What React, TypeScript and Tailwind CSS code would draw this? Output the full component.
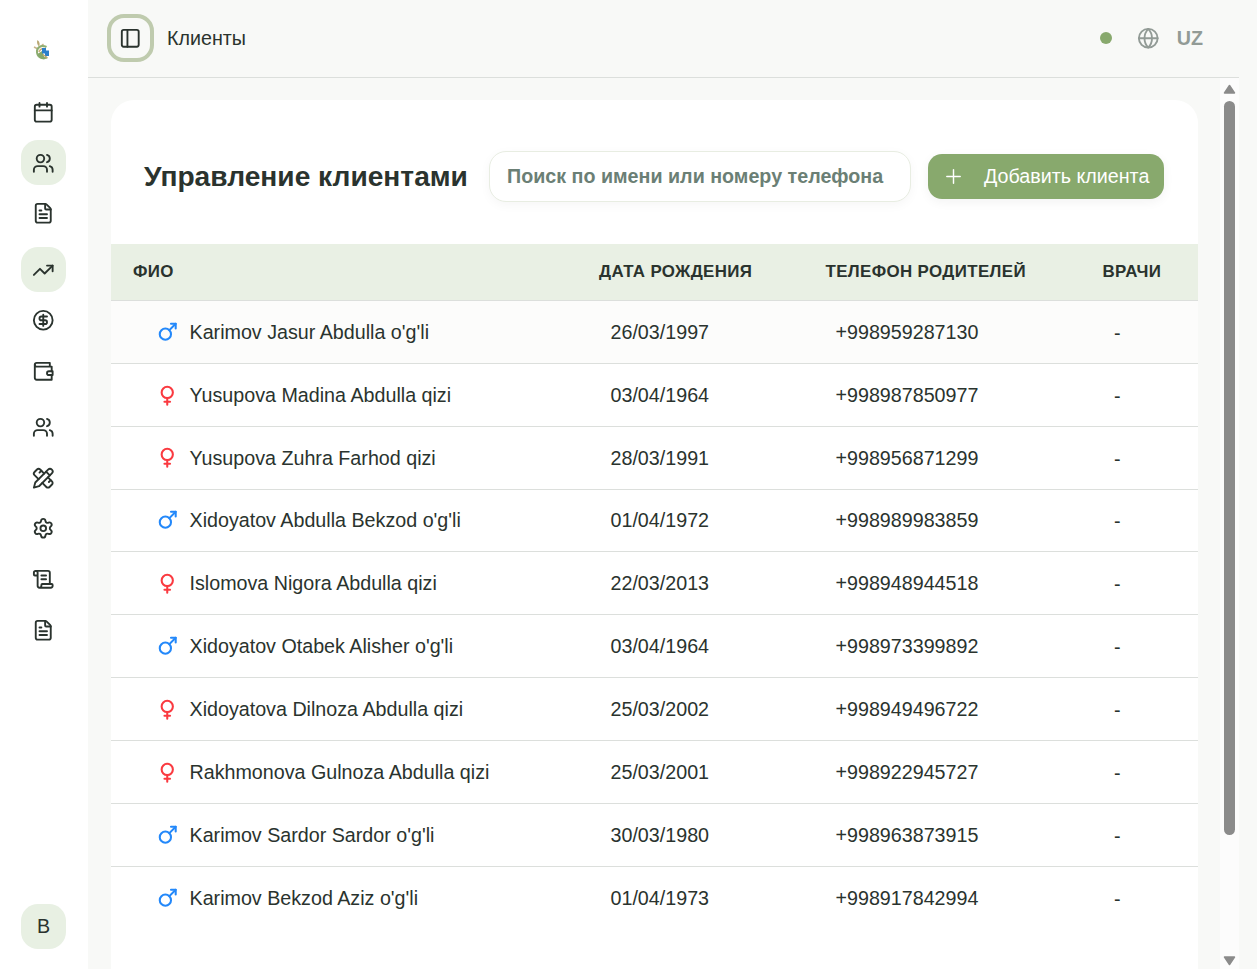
import {
  Calendar,
  CircleDollarSign,
  FileText,
  Globe,
  Mars,
  PanelLeft,
  Plus,
  ScrollText,
  Settings,
  TrendingUp,
  Users,
  Venus,
} from "lucide-react";
import clsx from "clsx";

const stroke = {
  viewBox: "0 0 24 24",
  fill: "none",
  stroke: "currentColor",
  strokeWidth: 2,
  strokeLinecap: "round",
  strokeLinejoin: "round",
} as const;

function WalletIcon({ className }: { className?: string }) {
  return (
    <svg className={className} {...stroke}>
      <path d="M21 12V7H5a2 2 0 0 1 0-4h14v4" />
      <path d="M3 5v14a2 2 0 0 0 2 2h16v-5" />
      <path d="M18 12a2 2 0 0 0 0 4h4v-4Z" />
    </svg>
  );
}

function ToolsIcon({ className }: { className?: string }) {
  return (
    <svg className={className} {...stroke}>
      <path d="m15 5 4 4" />
      <path d="M13 7 8.700 2.700a2.410 2.410 0 0 0-3.400 0L2.700 5.300a2.410 2.410 0 0 0 0 3.400L7 13" />
      <path d="m8 6 2-2" />
      <path d="m2 22 5.500-1.500L21.170 6.830a2.820 2.820 0 0 0-4-4L3.500 16.500Z" />
      <path d="m18 16 2-2" />
      <path d="m17 11 4.300 4.300c.94.94.94 2.460 0 3.400l-2.600 2.600c-.94.94-2.460.94-3.400 0L11 17" />
    </svg>
  );
}

const navItems = [
  { icon: Calendar, className: "mt-[25px]" },
  { icon: Users, className: "mt-[5px] pt-px", active: true },
  { icon: FileText, className: "mt-[6px]" },
  { icon: TrendingUp, className: "mt-[11px] pt-px", active: true },
  { icon: CircleDollarSign, className: "mt-[6px]" },
  { icon: WalletIcon, className: "mt-[6px]" },
  { icon: Users, className: "mt-[11px]" },
  { icon: ToolsIcon, className: "mt-[6px]" },
  { icon: Settings, className: "mt-[5px]" },
  { icon: ScrollText, className: "mt-[6px]" },
  { icon: FileText, className: "mt-[6px]" },
];

const clients = [
  { name: "Karimov Jasur Abdulla o'g'li", male: true, birth: "26/03/1997", phone: "+998959287130" },
  { name: "Yusupova Madina Abdulla qizi", male: false, birth: "03/04/1964", phone: "+998987850977" },
  { name: "Yusupova Zuhra Farhod qizi", male: false, birth: "28/03/1991", phone: "+998956871299" },
  { name: "Xidoyatov Abdulla Bekzod o'g'li", male: true, birth: "01/04/1972", phone: "+998989983859" },
  { name: "Islomova Nigora Abdulla qizi", male: false, birth: "22/03/2013", phone: "+998948944518" },
  { name: "Xidoyatov Otabek Alisher o'g'li", male: true, birth: "03/04/1964", phone: "+998973399892" },
  { name: "Xidoyatova Dilnoza Abdulla qizi", male: false, birth: "25/03/2002", phone: "+998949496722" },
  { name: "Rakhmonova Gulnoza Abdulla qizi", male: false, birth: "25/03/2001", phone: "+998922945727" },
  { name: "Karimov Sardor Sardor o'g'li", male: true, birth: "30/03/1980", phone: "+998963873915" },
  { name: "Karimov Bekzod Aziz o'g'li", male: true, birth: "01/04/1973", phone: "+998917842994" },
];

const columns = "grid grid-cols-[466px_226px_278px_117px]";

function Logo() {
  return (
    <svg className="mt-[39px] mr-[3px] h-[22px] w-[18px] shrink-0" viewBox="0 0 18 22">
      <path d="M4.500 1C7 3 7 5.500 6 7.500C4 5.500 3.500 3 4.500 1Z" fill="#b9a873" />
      <path d="M1 8L5 10M10.500 5L7 8" stroke="#c9b48a" strokeWidth="1.500" />
      <path d="M13.500 8C8 5 3.500 9 4 13.500C4.500 18 8.500 20.500 14 18.500" fill="none" stroke="#8fae72" strokeWidth="2" />
      <path d="M4.500 15L9 12L12 20C8 21 5.500 18 4.500 15Z" fill="#86a86b" />
      <path d="M6 13C7 10 9 9.500 11 9.500" fill="none" stroke="#d0ad78" strokeWidth="1.500" />
      <path d="M9 9H13V11.500H16V17H12V14.500H9Z" fill="#2b7fcb" />
      <path d="M10 15.500L14.500 19" stroke="#c0a26b" strokeWidth="1.200" />
    </svg>
  );
}

function Sidebar() {
  return (
    <aside className="flex w-[88px] shrink-0 flex-col items-center bg-white pr-[1px]">
      <Logo />
      <nav className="mt-[4px] flex flex-col items-center">
        {navItems.map(({ icon: Icon, className, active }, i) => (
          <a
            key={i}
            className={clsx("flex size-[45px] items-center justify-center rounded-[17px]", className, active && "bg-[#e8f0e3]")}
          >
            <Icon className="size-[22.5px]" />
          </a>
        ))}
      </nav>
      <div className="mt-auto mb-5 flex size-[45px] items-center justify-center rounded-[17px] bg-[#e8f0e3] text-[19.700px]">
        B
      </div>
    </aside>
  );
}

function Header() {
  return (
    <header className="mr-[18px] flex h-[78px] shrink-0 items-center border-b border-[#dcdfdc] pl-[19px]">
      <button className="mb-px flex h-[48px] w-[47px] items-center justify-center rounded-[17px] border-4 border-[#bfcbae]">
        <PanelLeft className="size-[22.5px]" />
      </button>
      <span className="ml-[13px] text-[19.700px]">Клиенты</span>
      <div className="ml-auto flex items-center pr-[36px] text-[#929b96]">
        <span className="size-3 rounded-full bg-[#88a96d]" />
        <Globe className="ml-[25px] size-[22.5px]" />
        <span className="ml-[17px] text-[19.700px] font-bold">UZ</span>
      </div>
    </header>
  );
}

function Scrollbar() {
  return (
    <div className="mr-[18px] flex w-[19px] flex-col items-center bg-[#fcfcfc] pt-[6px]">
      <svg className="h-[10px] w-[13px] shrink-0" viewBox="0 0 13 10">
        <path d="M6.500 1.500L11.500 9H1.500Z" fill="#8b8b8b" stroke="#8b8b8b" strokeWidth="1.500" strokeLinejoin="round" />
      </svg>
      <div className="mt-[7px] h-[734px] w-[11px] rounded-full bg-[#8b8b8b]" />
      <svg className="mt-auto mb-[3px] h-[10px] w-[13px] shrink-0" viewBox="0 0 13 10">
        <path d="M6.500 8.500L11.500 1H1.500Z" fill="#8b8b8b" stroke="#8b8b8b" strokeWidth="1.500" strokeLinejoin="round" />
      </svg>
    </div>
  );
}

export default function App() {
  return (
    <div className="flex h-[969px] w-[1257px] overflow-hidden bg-[#f8f9f7] font-['Liberation_Sans',sans-serif] text-[#2a332e]">
      <Sidebar />
      <div className="flex min-w-0 flex-1 flex-col">
        <Header />
        <div className="flex min-h-0 flex-1">
          <main className="flex flex-1 flex-col pt-[22px] pr-[22px] pl-[23px]">
            <section className="flex flex-1 flex-col rounded-t-[23px] bg-white">
              <div className="flex h-[144px] shrink-0 items-center pt-[9px] pr-[34px] pl-[33px]">
                <h1 className="w-[345px] pt-[2px] text-[28.150px] font-bold whitespace-nowrap">Управление клиентами</h1>
                <input
                  className="h-[51px] w-[422px] rounded-[17px] border border-[#e8ede2] bg-white px-[17px] text-[19.700px] font-bold shadow-[0_3px_11px_rgba(0,0,0,0.04)] placeholder:text-[#6b7f75]"
                  placeholder="Поиск по имени или номеру телефона"
                />
                <button className="ml-[17px] flex h-[45px] w-[236px] items-center rounded-[14px] bg-[#88a96d] pl-[14px] text-[19.700px] whitespace-nowrap text-white shadow-[0_3px_11px_rgba(0,0,0,0.05)]">
                  <Plus className="size-[23px] shrink-0" strokeWidth={1.5} />
                  <span className="ml-[19px]">Добавить клиента</span>
                </button>
              </div>
              <div className={clsx(columns, "h-[57px] shrink-0 items-center border-b border-[#dcdfdc] bg-[#e9f0e4] text-[16.900px] font-bold tracking-[0.370px]")}>
                <span className="pl-[22px]">ФИО</span>
                <span className="pl-[22px]">ДАТА РОЖДЕНИЯ</span>
                <span className="pl-[22.5px]">ТЕЛЕФОН РОДИТЕЛЕЙ</span>
                <span className="pl-[21.5px]">ВРАЧИ</span>
              </div>
              {clients.map((client, i) => (
                <div
                  key={client.phone}
                  className={clsx(
                    columns,
                    "h-[62.860px] shrink-0 items-center text-[19.700px]",
                    i === 0 && "bg-[#fcfcfb]",
                    i < clients.length - 1 && "border-b border-[#dcdfdc]",
                  )}
                >
                  <span className="flex items-center pl-[45px]">
                    {client.male ? (
                      <Mars className="size-[22.5px] text-[#2388fa]" strokeWidth={2.2} />
                    ) : (
                      <Venus className="size-[22.5px] text-[#fa3a40]" strokeWidth={2.2} />
                    )}
                    <span className="ml-[11px] pt-[1.300px]">{client.name}</span>
                  </span>
                  <span className="pt-[1.300px] pl-[33.5px]">{client.birth}</span>
                  <span className="pt-[1.300px] pl-[32.5px]">{client.phone}</span>
                  <span className="pt-[3.300px] pl-[33px]">-</span>
                </div>
              ))}
            </section>
          </main>
          <Scrollbar />
        </div>
      </div>
    </div>
  );
}
